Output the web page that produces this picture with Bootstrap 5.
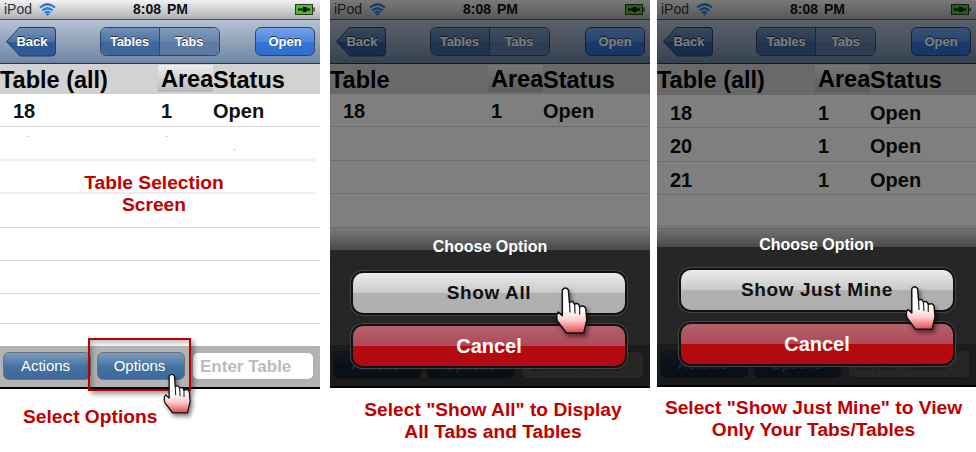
<!DOCTYPE html>
<html lang="en">
<head>
<meta charset="UTF-8">
<title>Table Selection Help</title>
<link rel="stylesheet" href="https://cdn.jsdelivr.net/npm/bootstrap@5.3.0/dist/css/bootstrap.min.css">
<style>
    html, body { height: 452px; overflow: hidden; }
    body { background: #fff; font-family: "Liberation Sans", Arial, sans-serif; color: #000; }

    .phone { width: 320px; height: 389px; background: #fff; }
    .phone-two { width: 320px; height: 388px; margin-left: 10px; }
    .phone-three { width: 319px; height: 387px; margin-left: 7px; }

    .status-bar { height: 20px; padding: 0 4px; background: linear-gradient(#f2f2f2, #adb0b3); border-bottom: 1px solid #4d5660; font-size: 14px; color: #333; }
    .status-time { font-weight: 700; font-size: 14px; color: #111; word-spacing: 2px; left: 133px; top: 0; line-height: 19px; }
    .wifi-ico { width: 17px; height: 13px; margin-left: 7px; }
    .batt-ico { width: 20px; height: 11px; margin: 0 1px 0 auto; }

    .top-bar { height: 44px; padding: 7px 5px 7px 6px; background: linear-gradient(#b6c2d3, #6e85a3); border-bottom: 1px solid #2c3540; }
    .back-btn { width: 50px; height: 30px; background: #2b3d58; clip-path: path('M0 15 L14 0 H45 Q50 0 50 5 V25 Q50 30 45 30 H14 Z'); color: #fff; font-size: 13px; font-weight: 700; text-shadow: 0 -1px 0 #223; padding-left: 14px; }
    .back-btn::before { content: ""; position: absolute; inset: 1px; background: linear-gradient(#7391b6, #4a72a5 50%, #2f5a96 51%, #2d5a98); clip-path: path('M0 14 L13 0 H43 Q48 0 48 4 V24 Q48 28 43 28 H13 Z'); }
    .back-btn span { position: relative; }
    .seg-group { width: 120px; height: 29px; margin-left: 8px; border: 1px solid #34465f; border-radius: 6px; overflow: hidden; }
    .seg-btn { width: 60px; padding-top: 1px; color: #fff; font-size: 12.500px; font-weight: 700; text-shadow: 0 -1px 0 #334; }
    .seg-on { background: linear-gradient(#7090b8, #4c72a3 50%, #3f6698 51%, #3f6698); border-right: 1px solid #2f4a70; }
    .seg-off { background: linear-gradient(#8099bb, #6885ab 50%, #5c7aa3 51%, #5c7aa3); }
    .open-btn { width: 60px; height: 29px; border: 1px solid #33465f; border-radius: 6px; background: linear-gradient(#75a3ea, #4c86de 50%, #3673d5 51%, #2f6dd0); color: #fff; font-size: 13px; font-weight: 700; text-shadow: 0 -1px 0 #234; padding: 0; }

    .head-row { height: 30px; background: #d2d2d2; font-size: 23.500px; font-weight: 700; line-height: 32px; }
    .phone-three .head-row { height: 31px; }
    .col-num { width: 158px; flex: none; }
    .col-area { width: 55px; flex: none; padding-left: 3px; height: 27px; margin-top: 1px; line-height: 28px; overflow: hidden; white-space: nowrap; background: linear-gradient(#ededed, #b9b9b9); }
    .cell-num { width: 161px; flex: none; padding-left: 13px; }
    .cell-area { width: 52px; flex: none; }
    .tb-row { height: 33.400px; border-bottom: 1px solid #dcdcdc; font-size: 20px; font-weight: 700; line-height: 34px; color: #111; }
    .phone-three .tb-row { line-height: 36px; }
    .tb-short { width: 315px; border-bottom: 2px solid #ececec; }
    .tb-end { height: 30px; }
    .tb-list { height: 252px; }
    .phone-three .tb-list { height: 249px; }
    .speck { width: 3px; height: 1px; background: #d4d4d4; }

    .bottom-bar { height: 43px; padding: 6px 5px 7px 3px; gap: 6px; background: #b3b3b3; border-bottom: 2px solid #000; }
    .bar-btn { width: 88px; height: 28px; padding: 0 3px 0 0; border: 1px solid #68727d; border-radius: 6px; background: linear-gradient(#7f9dc0, #42709f 55%, #3d6a9b); color: #fff; font-size: 15px; line-height: 24px; }
    .bar-input { width: 124px; height: 30px; margin-top: -1px; padding: 0 0 0 7px; border: 2px solid #a9b0b8; border-radius: 7px; background: #fff; color: #bbb; font-size: 17px; font-weight: 700; line-height: 27px; }

    .dim-layer { inset: 0; background: rgba(0, 0, 0, .5); }
    .sheet { left: 0; right: 0; bottom: 0; height: 160px; padding: 0 23px; background: linear-gradient(rgba(0, 0, 0, .04), rgba(0, 0, 0, .42) 22px, rgba(0, 0, 0, .7) 22px); color: #fff; }
    .phone-three .sheet { height: 162px; padding: 0 24px; }
    .sheet-title { height: 45px; padding-top: 9px; font-size: 16px; font-weight: 700; line-height: 20px; text-align: center; }
    .phone-three .sheet-title { padding-top: 10px; }
    .sheet-btn { display: block; width: 272px; height: 40px; padding: 0; border: 0; border-radius: 10px; font-size: 19px; font-weight: 700; line-height: 40px; letter-spacing: .6px; box-shadow: 0 0 0 2px #111, 0 0 0 3px #444; }
    .sheet-show { color: #111; background: linear-gradient(#ececec, #c9c9c9 50%, #b0b0b0 51%, #afafaf); }
    .sheet-cancel { margin-top: 13px; color: #fff; font-size: 20px; letter-spacing: 0; background: linear-gradient(#b5606c, #ad4a58 50%, #b40a10 51%, #b20a10); }
    .phone-three .sheet-cancel { margin-top: 14px; }

    .hand-ico { filter: drop-shadow(2px 3px 2px rgba(0, 0, 0, .5)); }
    .hand-one { left: 163px; top: 373px; width: 28px; height: 42px; }
    .hand-two { left: 225px; top: 287px; width: 33px; height: 48px; }
    .hand-three { left: 248px; top: 285px; width: 31px; height: 47px; }

    .red-frame { left: 88px; top: 338px; width: 103px; height: 53px; border: 2px solid #b80000; box-shadow: 3px 3px 5px rgba(0, 0, 0, .4), inset 3px 3px 5px rgba(0, 0, 0, .25); }
    .note { color: #c00000; font-size: 19.200px; font-weight: 700; line-height: 22px; text-align: center; }
    .note-over { left: 0; top: 172px; width: 308px; }
    .note-one { padding: 17px 0 0 23px; text-align: left; }
    .note-two { padding: 11px 0 0 6px; }
    .note-three { padding: 10px 6px 0 0; }
</style>
</head>
<body>

<svg class="position-absolute" width="0" height="0">
    <defs>
        <linearGradient id="handFill" x1="0" y1="0" x2="0" y2="1">
            <stop offset="0" stop-color="#fff"/>
            <stop offset=".5" stop-color="#fff"/>
            <stop offset=".72" stop-color="#fcc"/>
            <stop offset="1" stop-color="#e0484e"/>
        </linearGradient>
        <symbol id="hand" viewBox="0 0 32 47">
            <path d="M7 3Q10 -1 13 3L14 15Q17 13 18.500 16L19 17Q22 15 23.500 18L24 19.500Q28 17 30 21L31 32L28 45H11L2 33Q0.500 27 3 24.500L7 28Z" fill="url(#handFill)" stroke="#111" stroke-width="1.500" stroke-linejoin="round"/>
            <path d="M14 15L14.500 25M19 17L19.500 26M24 19.500L24 27" fill="none" stroke="#222" stroke-width="1.200"/>
        </symbol>
        <symbol id="wifi" viewBox="0 0 17 13">
            <path d="M1 4.500Q8.500 -2 16 4.500M3.500 7.500Q8.500 3 13.500 7.500M6 10Q8.500 8 11 10" fill="none" stroke="#1f7ed8" stroke-width="2.200"/>
            <path d="M8.500 13L6.800 11.200Q8.500 10 10.200 11.200Z" fill="#1f7ed8"/>
        </symbol>
        <symbol id="batt" viewBox="0 0 20 11">
            <rect x=".5" y=".5" width="17" height="10" fill="#45c21d" stroke="#333"/>
            <rect x="18" y="3.500" width="2" height="4" fill="#666"/>
            <path d="M3 4.500H8V3H11.500V4.500H15V6.500H11.500V8H8V6.500H3Z" fill="#000"/>
        </symbol>
    </defs>
</svg>

<div class="d-flex align-items-start">

    <!-- first screen -->
    <div>
        <div class="phone position-relative d-flex flex-column">
            <div class="status-bar d-flex align-items-center position-relative">
                <span>iPod</span>
                <svg class="wifi-ico"><use href="#wifi"/></svg>
                <span class="status-time position-absolute">8:08 PM</span>
                <svg class="batt-ico"><use href="#batt"/></svg>
            </div>
            <div class="top-bar d-flex align-items-center justify-content-between">
                <button class="back-btn btn position-relative d-flex align-items-center justify-content-center rounded-0 border-0"><span>Back</span></button>
                <div class="seg-group d-flex">
                    <div class="seg-btn seg-on d-flex align-items-center justify-content-center">Tables</div>
                    <div class="seg-btn seg-off d-flex align-items-center justify-content-center">Tabs</div>
                </div>
                <button class="open-btn btn">Open</button>
            </div>
            <div class="head-row d-flex">
                <div class="col-num">Table (all)</div>
                <div class="col-area">Area</div>
                <div>Status</div>
            </div>
            <div class="tb-list overflow-hidden">
                <div class="tb-row d-flex"><div class="cell-num">18</div><div class="cell-area">1</div><div>Open</div></div>
                <div class="tb-row tb-short"></div>
                <div class="tb-row tb-short"></div>
                <div class="tb-row"></div>
                <div class="tb-row"></div>
                <div class="tb-row"></div>
                <div class="tb-row tb-end"></div>
            </div>
            <div class="bottom-bar d-flex mt-auto">
                <button class="bar-btn btn">Actions</button>
                <button class="bar-btn btn">Options</button>
                <div class="bar-input">Enter Table</div>
            </div>
            <span class="speck position-absolute" style="left: 27px; top: 136px"></span>
            <span class="speck position-absolute" style="left: 165px; top: 136px"></span>
            <span class="speck position-absolute" style="left: 233px; top: 149px"></span>
            <div class="note note-over position-absolute">Table Selection<br>Screen</div>
            <div class="red-frame position-absolute"></div>
            <svg class="hand-ico hand-one position-absolute"><use href="#hand"/></svg>
        </div>
        <div class="note note-one">Select Options</div>
    </div>

    <!-- second screen -->
    <div class="phone-two">
        <div class="phone phone-two m-0 position-relative d-flex flex-column">
            <div class="status-bar d-flex align-items-center position-relative">
                <span>iPod</span>
                <svg class="wifi-ico"><use href="#wifi"/></svg>
                <span class="status-time position-absolute">8:08 PM</span>
                <svg class="batt-ico"><use href="#batt"/></svg>
            </div>
            <div class="top-bar d-flex align-items-center justify-content-between">
                <button class="back-btn btn position-relative d-flex align-items-center justify-content-center rounded-0 border-0"><span>Back</span></button>
                <div class="seg-group d-flex">
                    <div class="seg-btn seg-on d-flex align-items-center justify-content-center">Tables</div>
                    <div class="seg-btn seg-off d-flex align-items-center justify-content-center">Tabs</div>
                </div>
                <button class="open-btn btn">Open</button>
            </div>
            <div class="head-row d-flex">
                <div class="col-num">Table</div>
                <div class="col-area">Area</div>
                <div>Status</div>
            </div>
            <div class="tb-list overflow-hidden">
                <div class="tb-row d-flex"><div class="cell-num">18</div><div class="cell-area">1</div><div>Open</div></div>
                <div class="tb-row"></div>
                <div class="tb-row"></div>
                <div class="tb-row"></div>
                <div class="tb-row"></div>
                <div class="tb-row"></div>
                <div class="tb-row tb-end"></div>
            </div>
            <div class="bottom-bar d-flex mt-auto">
                <button class="bar-btn btn">Actions</button>
                <button class="bar-btn btn">Options</button>
                <div class="bar-input">Enter Table</div>
            </div>
            <div class="dim-layer position-absolute"></div>
            <div class="sheet position-absolute">
                <div class="sheet-title">Choose Option</div>
                <button class="sheet-btn sheet-show">Show All</button>
                <button class="sheet-btn sheet-cancel">Cancel</button>
            </div>
            <svg class="hand-ico hand-two position-absolute"><use href="#hand"/></svg>
        </div>
        <div class="note note-two">Select "Show All" to Display<br>All Tabs and Tables</div>
    </div>

    <!-- third screen -->
    <div class="phone-three">
        <div class="phone phone-three m-0 position-relative d-flex flex-column">
            <div class="status-bar d-flex align-items-center position-relative">
                <span>iPod</span>
                <svg class="wifi-ico"><use href="#wifi"/></svg>
                <span class="status-time position-absolute">8:08 PM</span>
                <svg class="batt-ico"><use href="#batt"/></svg>
            </div>
            <div class="top-bar d-flex align-items-center justify-content-between">
                <button class="back-btn btn position-relative d-flex align-items-center justify-content-center rounded-0 border-0"><span>Back</span></button>
                <div class="seg-group d-flex">
                    <div class="seg-btn seg-on d-flex align-items-center justify-content-center">Tables</div>
                    <div class="seg-btn seg-off d-flex align-items-center justify-content-center">Tabs</div>
                </div>
                <button class="open-btn btn">Open</button>
            </div>
            <div class="head-row d-flex">
                <div class="col-num">Table (all)</div>
                <div class="col-area">Area</div>
                <div>Status</div>
            </div>
            <div class="tb-list overflow-hidden">
                <div class="tb-row d-flex"><div class="cell-num">18</div><div class="cell-area">1</div><div>Open</div></div>
                <div class="tb-row d-flex"><div class="cell-num">20</div><div class="cell-area">1</div><div>Open</div></div>
                <div class="tb-row d-flex"><div class="cell-num">21</div><div class="cell-area">1</div><div>Open</div></div>
                <div class="tb-row"></div>
                <div class="tb-row"></div>
                <div class="tb-row"></div>
                <div class="tb-row tb-end"></div>
            </div>
            <div class="bottom-bar d-flex mt-auto">
                <button class="bar-btn btn">Actions</button>
                <button class="bar-btn btn">Options</button>
                <div class="bar-input">Enter Table</div>
            </div>
            <div class="dim-layer position-absolute"></div>
            <div class="sheet position-absolute">
                <div class="sheet-title">Choose Option</div>
                <button class="sheet-btn sheet-show">Show Just Mine</button>
                <button class="sheet-btn sheet-cancel">Cancel</button>
            </div>
            <svg class="hand-ico hand-three position-absolute"><use href="#hand"/></svg>
        </div>
        <div class="note note-three">Select "Show Just Mine" to View<br>Only Your Tabs/Tables</div>
    </div>

</div>

<script src="https://cdn.jsdelivr.net/npm/bootstrap@5.3.0/dist/js/bootstrap.bundle.min.js"></script>
</body>
</html>
